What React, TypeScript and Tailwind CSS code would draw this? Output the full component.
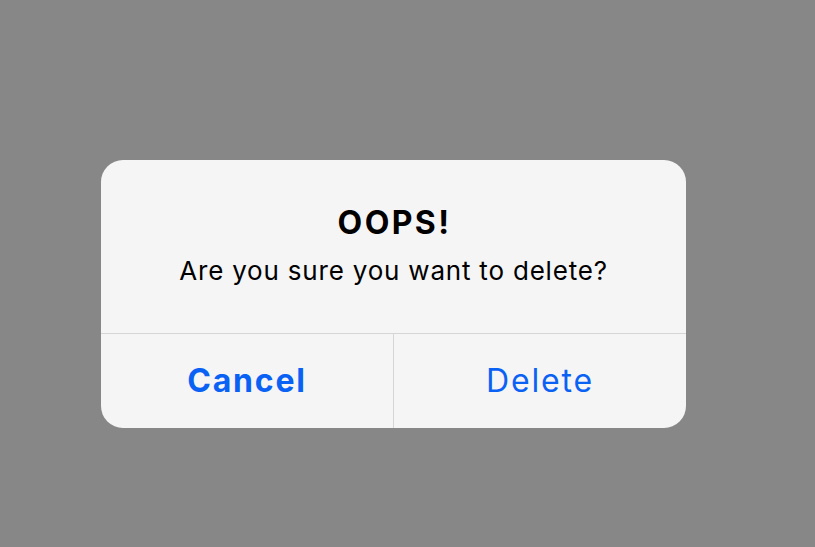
import React from 'react';

const App: React.FC = () => {
    return (
        <div
            className="w-[815px] h-[547px] bg-[#878787] pl-[101px] pt-[160px]"
            style={{ fontFamily: 'Inter, "Noto Sans", sans-serif' }}
        >
            <div className="w-[585px] h-[268px] bg-[#f5f5f5] rounded-[22px] overflow-hidden flex flex-col">
                <div className="h-[174px] flex flex-col items-center pt-[43px] border-b border-[#d5d5d5]">
                    <h2 className="text-[32px] font-bold text-black leading-[40px] tracking-[2.4px] pl-[2px]">OOPS!</h2>
                    <p className="mt-[12px] text-[26px] text-black leading-[32px] tracking-[0.8px]">
                        Are you sure you want to delete?
                    </p>
                </div>
                <div className="flex-1 grid grid-cols-[293px_1fr]">
                    <button className="border-r border-[#d5d5d5] text-[32px] leading-[48px] font-bold text-[#0a62f5] tracking-[1.8px] flex items-center justify-center">
                        Cancel
                    </button>
                    <button className="text-[32px] leading-[48px] text-[#0a62f5] tracking-[1.8px] flex items-center justify-center">
                        Delete
                    </button>
                </div>
            </div>
        </div>
    );
};

export default App;
